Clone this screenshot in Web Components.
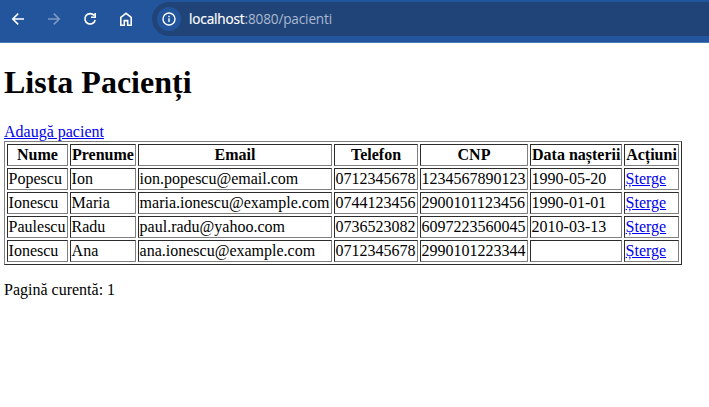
<!DOCTYPE html>
<html lang="ro">
<head>
<meta charset="utf-8">
<title>Lista Pacienți</title>
<style>
html, body { margin: 0; background: #fff; }
body { font: 16px/18px "Liberation Serif", "Times New Roman", serif; color: #000; overflow: hidden; }
</style>
</head>
<body>
<browser-bar><span slot="host">localhost</span><span slot="path">:8080/pacienti</span></browser-bar>
<patients-page page="1"><span slot="title">Lista Pacienți</span><patients-table></patients-table></patients-page>

<script>
class BrowserBar extends HTMLElement {
  constructor() {
    super();
    this.attachShadow({ mode: "open" }).innerHTML = `
      <style>
        :host { display: flex; box-sizing: border-box; height: 43px; padding-top: 2px; background: #23559c; border-bottom: 1px solid #4b7ab9; overflow: hidden; }
        nav { display: flex; gap: 16px; padding: 7px 16px 0 8px; }
        svg { display: block; width: 20px; height: 20px; fill: none; stroke: #fff; stroke-width: 1.6; }
        .off { opacity: .4; }
        .field { display: flex; flex: 1; align-items: center; box-sizing: border-box; height: 34px; padding-left: 5px; background: #214478; border-radius: 17px 0 0 17px; }
        .info { display: flex; align-items: center; justify-content: center; width: 24px; height: 24px; border-radius: 50%; background: #23559c; }
        .url { display: flex; margin-left: 8px; font: 13.6px/18px "Open Sans", "Noto Sans", sans-serif; letter-spacing: -0.16px; color: #a9b9d1; white-space: pre; }
        .host { color: #fff; -webkit-text-stroke: 0.2px #fff; }
      </style>
      <nav>
        <svg viewBox="0 0 20 20"><path d="M16 10H5M10.2 4.6L4.8 10l5.4 5.4"/></svg>
        <svg class="off" viewBox="0 0 20 20"><path d="M4 10h11M9.8 4.6l5.4 5.4-5.4 5.4"/></svg>
        <svg viewBox="0 0 20 20"><path d="M14.2 6.6A5.2 5.2 0 1 0 15.2 11M15.2 4v4.2H11"/></svg>
        <svg viewBox="0 0 20 20"><path d="M4.8 16.2V8.4L10 4.3l5.2 4.1v7.8h-3.5v-4.6H8.3v4.6z"/></svg>
      </nav>
      <div class="field">
        <div class="info"><svg viewBox="0 0 20 20"><circle cx="10" cy="10" r="6" stroke-width="1.4"/><path d="M10 9.3v3.8M10 6.8v1.5" stroke-width="1.4"/></svg></div>
        <div class="url"><span class="host"><slot name="host"></slot></span><slot name="path"></slot></div>
      </div>`;
  }
}

class PatientsPage extends HTMLElement {
  constructor() {
    super();
    this.attachShadow({ mode: "open" }).innerHTML = `
      <style>
        :host { display: block; padding: 21px 4px 0; }
        h1 { margin: 0 0 22px; font-size: 32px; line-height: 37px; font-weight: bold; }
        .add { display: block; width: max-content; color: #0000ee; }
        p { margin: 16px 0; }
      </style>
      <h1><slot name="title"></slot></h1>
      <a class="add" href="#">Adaugă pacient</a>
      <slot></slot>
      <p>Pagină curentă: ${this.getAttribute("page") || 1}</p>`;
  }
}

class PatientsTable extends HTMLElement {
  constructor() {
    super();
    const columns = [["Nume", 61], ["Prenume", 66], ["Email", 194], ["Telefon", 84], ["CNP", 108], ["Data nașterii", 92], ["Acțiuni", 55]];
    const patients = [
      ["Popescu", "Ion", "ion.popescu@email.com", "0712345678", "1234567890123", "1990-05-20"],
      ["Ionescu", "Maria", "maria.ionescu@example.com", "0744123456", "2900101123456", "1990-01-01"],
      ["Paulescu", "Radu", "paul.radu@yahoo.com", "0736523082", "6097223560045", "2010-03-13"],
      ["Ionescu", "Ana", "ana.ionescu@example.com", "0712345678", "2990101223344", ""]
    ];
    this.attachShadow({ mode: "open" }).innerHTML = `
      <style>
        :host { display: block; }
        table { table-layout: fixed; width: 678px; border: 1px solid; border-color: #808080 #2c2c2c #2c2c2c #808080; border-spacing: 2px; }
        th, td { box-sizing: border-box; height: 22px; padding: 1px; border: 1px solid; border-color: #2c2c2c #808080 #808080 #2c2c2c; white-space: nowrap; }
        td { padding-left: 0.6px; }
        a { color: #0000ee; }
      </style>
      <table>
        <colgroup>${columns.map(c => `<col style="width:${c[1]}px">`).join("")}</colgroup>
        <thead><tr>${columns.map(c => `<th>${c[0]}</th>`).join("")}</tr></thead>
        <tbody>${patients.map(p => `<tr>${p.map(v => `<td>${v}</td>`).join("")}<td><a href="#">Șterge</a></td></tr>`).join("")}</tbody>
      </table>`;
  }
}

customElements.define("browser-bar", BrowserBar);
customElements.define("patients-table", PatientsTable);
customElements.define("patients-page", PatientsPage);
</script>
</body>
</html>
